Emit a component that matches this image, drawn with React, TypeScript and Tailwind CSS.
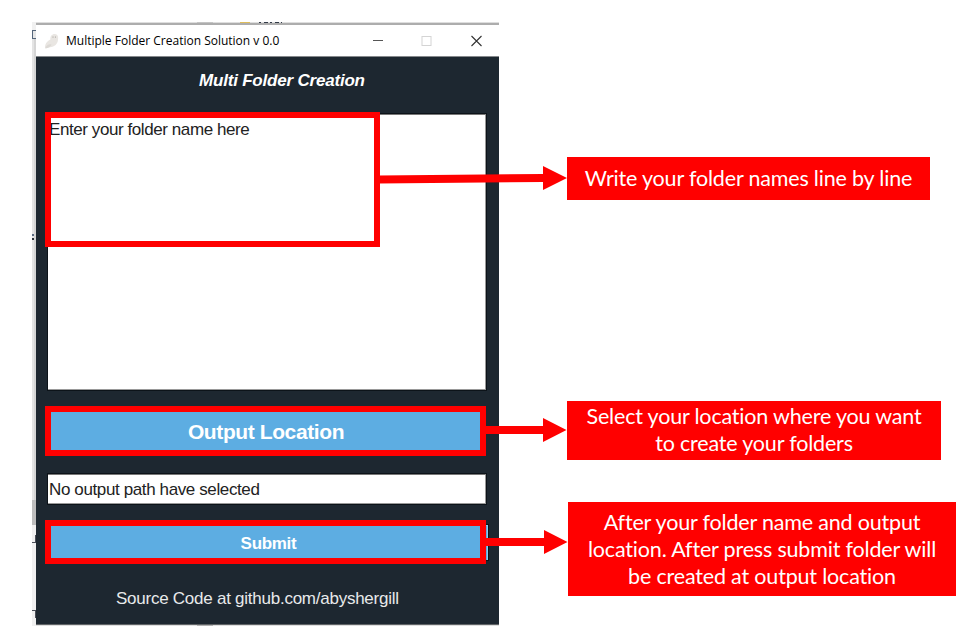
import type { ReactNode } from "react";

function Frame({ className }: { className: string }) {
  return <div className={`pointer-events-none absolute border-6 border-[#ff0000] ${className}`} />;
}

function Callout({ className, lines }: { className: string; lines: string[] }) {
  return (
    <div className={`flex flex-col items-center justify-center bg-[#ff0000] font-['Lato',sans-serif] text-[21.5px] leading-[27px] tracking-[-0.18px] text-white ${className}`}>
      {lines.map((line) => (
        <span key={line} className="whitespace-nowrap">
          {line}
        </span>
      ))}
    </div>
  );
}

function TitleBar() {
  return (
    <div className="flex h-[34px] w-full items-center border-t-2 border-b border-t-[#adadad] border-b-[#85888b] bg-white">
      <svg className="ml-2 h-4 w-4 shrink-0" viewBox="0 0 16 16">
        <path d="M1.2 15.2C.6 12 2.4 8.6 6.4 6.6C6 3 8 .8 10.8 .9C13.6 1 14.6 3.4 14 6.4C13.8 11 10.6 13.6 6 14.2C4 14.5 3 15.4 1.2 15.2Z" fill="#e9e6e2" />
        <path d="M1.2 15.2C2.4 12 5.6 10.6 7.6 11.8C6.4 13.8 4 15.4 1.2 15.2Z" fill="#dcd9d5" />
        <circle cx="9" cy="4" r=".5" fill="#8d8983" />
        <circle cx="11.4" cy="4" r=".5" fill="#8d8983" />
      </svg>
      <span className="ml-[6px] w-[216px] font-['Open_Sans',sans-serif] text-[12px] whitespace-nowrap text-black">
        Multiple Folder Creation Solution v 0.0
      </span>
      <svg className="ml-[90px] h-3 w-[112px] shrink-0" viewBox="0 0 112 12" fill="none">
        <path d="M1 5.5H11" stroke="#555" strokeWidth="1" />
        <rect x="50" y="1.5" width="9" height="9" stroke="#d4d4d4" />
        <path d="M99.5 1L109.5 11M109.5 1L99.5 11" stroke="#333" strokeWidth="1.1" />
      </svg>
    </div>
  );
}

function Field({ className, children }: { className: string; children: ReactNode }) {
  return (
    <div className={`relative ml-3 w-[438px] border-t border-r border-b border-t-[#777] border-r-[#999] border-b-[#999] bg-white text-black outline-1 outline-[#0c1319] ${className}`}>
      {children}
    </div>
  );
}

function AppWindow() {
  return (
    <div className="flex h-[602px] w-[463px] flex-col border-b border-[#5f6366] bg-[#1d2730] font-['Liberation_Sans',Arial,sans-serif]">
      <TitleBar />
      <h1 className="mt-[14px] ml-[163px] text-[17px] leading-5 font-bold tracking-[-0.2px] whitespace-nowrap text-white italic">
        Multi Folder Creation
      </h1>
      <Field className="mt-[23px] h-[276px]">
        <span className="block pt-[5px] pl-px text-[17px] leading-5 tracking-[-0.42px] whitespace-nowrap text-[#222]">
          Enter your folder name here
        </span>
        <Frame className="-top-[3px] -left-[3px] h-[135px] w-[335px]" />
      </Field>
      <button className="relative mt-[21px] ml-3 flex h-10 w-[438px] items-center justify-center border-t border-[#8ccdf1] bg-[#5dade2] text-[21px] font-bold tracking-[-0.4px] whitespace-nowrap text-white">
        <span className="mr-0.5 pt-px">Output Location</span>
        <Frame className="-top-[6px] -left-[3px] h-[50px] w-[441px]" />
      </button>
      <Field className="mt-[23px] h-[30px]">
        <span className="block pt-[5px] pl-px text-[17px] leading-5 tracking-[-0.38px] whitespace-nowrap text-[#222]">
          No output path have selected
        </span>
      </Field>
      <button className="relative mt-[21px] ml-3 flex h-[35px] w-[440px] items-center justify-center border-t border-r border-t-[#8ccdf1] border-r-[#8ccdf1] bg-[#5dade2] text-[17px] font-bold tracking-[-0.3px] text-white outline-1 outline-[#0c1319]">
        <span className="ml-0.5 pt-0.5">Submit</span>
        <Frame className="-top-[6px] -left-[3px] h-[44px] w-[441px]" />
      </button>
      <p className="mt-[29px] ml-[80px] text-[17px] leading-5 tracking-[-0.25px] whitespace-nowrap text-[#e8eaeb]">
        Source Code at github.com/abyshergill
      </p>
    </div>
  );
}

function BackgroundSliver() {
  return (
    <div className="mt-[22px] ml-8 flex h-[604px] w-1 shrink-0 flex-col overflow-hidden bg-[#f0f0f0]">
      <div className="mt-2 h-[9px] w-1 border-y border-l border-[#55657a] bg-[#e6e6e6]" />
      <div className="flex h-[461px] flex-col items-start border-r-2 border-[#d5d5d5] bg-[#e4e4e4]">
        <div className="mt-[195px] h-0.5 w-0.5 bg-[#5a6a80]" />
        <div className="mt-0.5 h-0.5 w-0.5 bg-[#2a3038]" />
      </div>
      <div className="h-[25px] bg-[#bdbdbd]" />
      <div className="mt-2.5 h-2 w-1 border-r border-b border-[#4b4f58]" />
      <div className="mt-[67px] h-2 w-1 border-t border-r border-[#4b4f58]" />
    </div>
  );
}

export default function App() {
  return (
    <main className="relative flex h-[632px] w-[968px] overflow-hidden bg-white">
      <BackgroundSliver />
      <div className="mt-[22px] h-[604px] w-[463px] shrink-0 border-t border-b border-[#dedede]">
        <AppWindow />
      </div>
      <div className="ml-[68px] flex flex-col pt-[157px]">
        <Callout className="h-[43px] w-[363px]" lines={["Write your folder names line by line"]} />
        <Callout
          className="mt-[201px] h-[59px] w-[374px] pb-0.5"
          lines={["Select your location where you want", "to create your folders"]}
        />
        <Callout
          className="mt-[42px] ml-px h-[94px] w-[388px]"
          lines={[
            "After your folder name and output",
            "location. After press submit folder will",
            "be created at output location",
          ]}
        />
      </div>
      <svg className="pointer-events-none absolute inset-0" width="968" height="632" fill="#ff0000">
        <path d="M379 175.5L543 174V166L567 178L543 190V182L379 183.5Z" />
        <path d="M485 426H543V418L566.5 430L543 442V434H485Z" />
        <path d="M485 538H544V530L567.5 542L544 554V546H485Z" />
        <path d="M197 22H213V23H197Z" fill="#c4c4c4" />
        <path d="M240 22H250V23H240Z" fill="#dfbd5b" />
        <path d="M259 22.5H282" stroke="#333b48" strokeDasharray="2 3 4 2" />
        <path d="M197 625H213V626H197Z" fill="#b0b0b0" />
      </svg>
    </main>
  );
}
